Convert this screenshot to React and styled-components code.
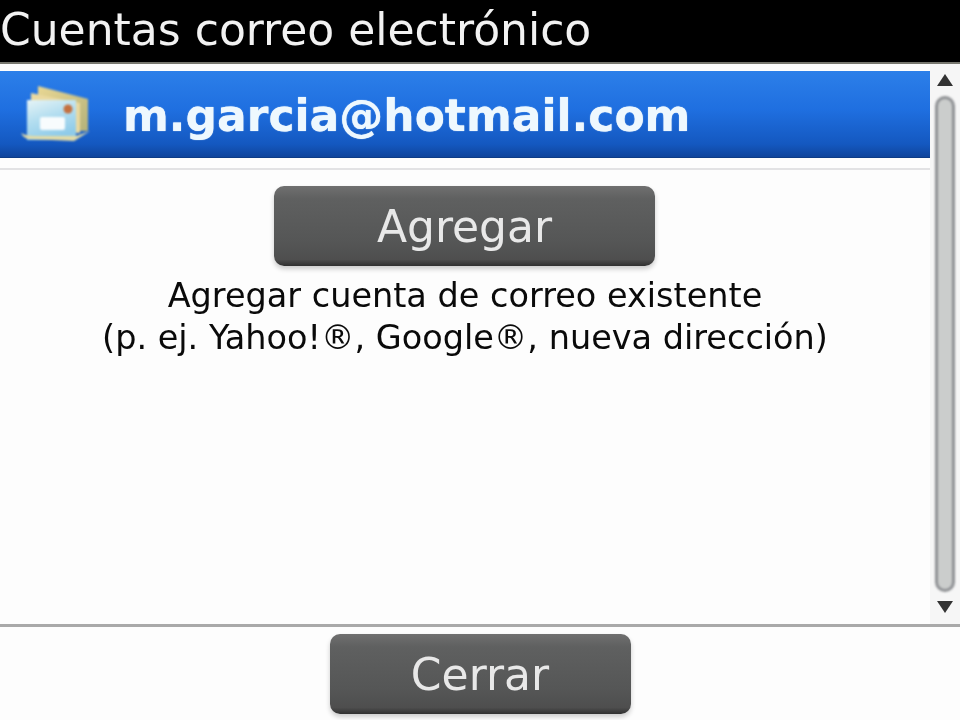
import React from "react";
import styled, { createGlobalStyle } from "styled-components";

const GlobalStyle = createGlobalStyle`
  html, body {
    margin: 0;
    padding: 0;
    background: #fff;
  }
`;

const Screen = styled.div`
  width: 960px;
  height: 720px;
  overflow: hidden;
  display: flex;
  flex-direction: column;
  font-family: "DejaVu Sans", sans-serif;
  background: #fdfdfd;
`;

const Header = styled.div`
  height: 64px;
  flex: none;
  background: #000;
  border-bottom: 2px solid #77776f;
  box-sizing: border-box;
`;

const Title = styled.div`
  color: #f2f2f2;
  font-size: 44px;
  line-height: 60px;
  white-space: nowrap;
  filter: blur(0.6px);
`;

const Body = styled.div`
  height: 560px;
  flex: none;
  display: flex;
`;

const Content = styled.div`
  width: 930px;
  padding-top: 7px;
  display: flex;
  flex-direction: column;
  align-items: center;
  box-sizing: border-box;
`;

const AccountRow = styled.div`
  width: 100%;
  height: 87px;
  flex: none;
  display: flex;
  align-items: center;
  gap: 33px;
  padding-left: 20px;
  box-sizing: border-box;
  background: linear-gradient(#2c7fe9 0%, #1f6fe0 45%, #1458c0 85%, #0f459c 100%);
  border-bottom: 1px solid #0d3c86;
`;

const Email = styled.div`
  color: #eef8fe;
  font-size: 44px;
  font-weight: 700;
  line-height: 87px;
  padding-top: 3px;
  white-space: nowrap;
  text-shadow: 0 0 1px #eef8fe;
  filter: blur(0.6px);
`;

const Divider = styled.div`
  width: 100%;
  height: 2px;
  flex: none;
  margin-top: 10px;
  background: #e2e2e4;
`;

const Button = styled.div`
  width: ${(p) => p.$width}px;
  height: 80px;
  flex: none;
  display: flex;
  align-items: center;
  justify-content: center;
  box-sizing: border-box;
  border-radius: 10px;
  background: linear-gradient(#707070 0%, #5f6060 16%, #555656 70%, #4e4e4e 92%, #303030 100%);
  box-shadow: 0 3px 5px rgba(0, 0, 0, 0.2);
`;

const ButtonLabel = styled.span`
  color: #e8e8e8;
  font-size: 44px;
  filter: blur(0.6px);
`;

const AddButton = styled(Button)`
  margin-top: 16px;
  margin-left: -1px;
`;

const HelpText = styled.div`
  margin-top: 9px;
  text-align: center;
  color: #0a0a0a;
  font-size: 33.5px;
  line-height: 42px;
  white-space: nowrap;
  filter: blur(0.5px);
`;

const ScrollTrack = styled.div`
  width: 30px;
  flex: none;
  display: flex;
  flex-direction: column;
  align-items: center;
  background: #f6f6f6;
`;

const Arrow = styled.svg`
  width: 16px;
  height: 12px;
  flex: none;
  fill: #333;
  filter: blur(0.5px);
`;

const UpArrow = styled(Arrow)`
  margin-top: 10px;
`;

const DownArrow = styled(Arrow)`
  margin-top: 9px;
`;

const ScrollThumb = styled.div`
  width: 20px;
  height: 496px;
  flex: none;
  margin-top: 10px;
  box-sizing: border-box;
  border: 3px solid #8f9194;
  border-radius: 10px;
  background: #cbcdcc;
  filter: blur(0.8px);
`;

const Footer = styled.div`
  flex: 1;
  display: flex;
  justify-content: center;
  padding-top: 7px;
  border-top: 3px solid #a9a9a9;
  background: #fdfdfd;
`;

const MailIcon = styled.svg`
  width: 70px;
  height: 58px;
  flex: none;
  filter: blur(0.9px);
`;

const App = () => {
  return (
    <>
      <GlobalStyle />
      <Screen>
        <Header>
          <Title>Cuentas correo electrónico</Title>
        </Header>
        <Body>
          <Content>
            <AccountRow>
              <MailIcon viewBox="0 0 70 58">
                <defs>
                  <linearGradient id="front" x1="0" y1="0" x2="0.4" y2="1">
                    <stop offset="0" stopColor="#e6f4f6" />
                    <stop offset="0.5" stopColor="#b4def0" />
                    <stop offset="1" stopColor="#8fcbe9" />
                  </linearGradient>
                  <linearGradient id="back" x1="0" y1="0" x2="1" y2="1">
                    <stop offset="0" stopColor="#e9d793" />
                    <stop offset="1" stopColor="#b4b27a" />
                  </linearGradient>
                </defs>
                <path d="M18 1 L68 14 L68 46 L18 46 Z" fill="url(#back)" />
                <path d="M11 8 L60 18 L60 48 L11 48 Z" fill="#ead9a0" />
                <rect x="7" y="15" width="49" height="40" fill="url(#front)" />
                <circle cx="48" cy="24" r="4.5" fill="#c4703f" />
                <rect x="20" y="32" width="25" height="13" rx="2" fill="#f8fcfd" />
                <path d="M1 48 Q4 54 10 54 L54 56 L70 46 L56 51 L14 51 Q6 51 1 48 Z" fill="#e3dba6" />
              </MailIcon>
              <Email>m.garcia@hotmail.com</Email>
            </AccountRow>
            <Divider />
            <AddButton $width={381}>
              <ButtonLabel>Agregar</ButtonLabel>
            </AddButton>
            <HelpText>
              Agregar cuenta de correo existente
              <br />
              (p. ej. Yahoo!®, Google®, nueva dirección)
            </HelpText>
          </Content>
          <ScrollTrack>
            <UpArrow viewBox="0 0 16 12">
              <path d="M8 0 L16 12 L0 12 Z" />
            </UpArrow>
            <ScrollThumb />
            <DownArrow viewBox="0 0 16 12">
              <path d="M0 0 L16 0 L8 12 Z" />
            </DownArrow>
          </ScrollTrack>
        </Body>
        <Footer>
          <Button $width={301}>
            <ButtonLabel>Cerrar</ButtonLabel>
          </Button>
        </Footer>
      </Screen>
    </>
  );
};

export default App;
